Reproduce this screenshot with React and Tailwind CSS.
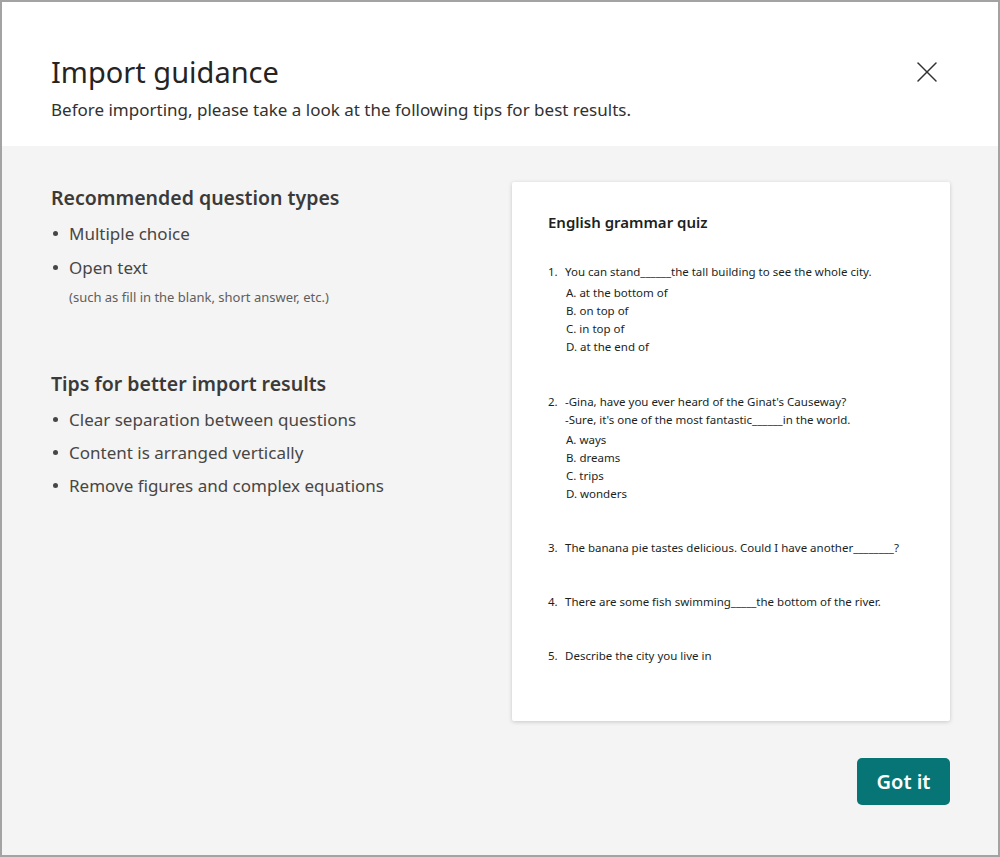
import { X } from 'lucide-react';

const questions = [
  {
    n: '1.',
    lines: ['You can stand______the tall building to see the whole city.'],
    options: ['A. at the bottom of', 'B. on top of', 'C. in top of', 'D. at the end of'],
    optGap: 'mt-[3px]',
  },
  {
    n: '2.',
    lines: ["-Gina, have you ever heard of the Ginat's Causeway?", "-Sure, it's one of the most fantastic______in the world."],
    options: ['A. ways', 'B. dreams', 'C. trips', 'D. wonders'],
    top: 'mt-[1px]',
    optGap: 'mt-[2px]',
  },
  { n: '3.', lines: ['The banana pie tastes delicious. Could I have another________?'], options: [] },
  { n: '4.', lines: ['There are some fish swimming_____the bottom of the river.'], options: [] },
  { n: '5.', lines: ['Describe the city you live in'], options: [] },
];

function Bullet({ children }) {
  return (
    <li className="flex items-center h-[33px] text-[17px] text-[#484644]">
      <span className="w-[5px] h-[5px] rounded-full bg-[#484644] ml-[2px] mr-[11px]" />
      {children}
    </li>
  );
}

export default function App() {
  return (
    <div
      className="w-[1000px] h-[857px] flex flex-col border-2 border-[#a3a3a3] bg-[#f4f4f4] overflow-hidden"
      style={{ fontFamily: '"Noto Sans", "Open Sans", sans-serif' }}
    >
      {/* Header */}
      <div className="bg-white h-[144px] shrink-0 flex justify-between pl-[49px] pr-[60px]">
        <div className="pt-[50px]">
          <h1 className="text-[29px] leading-[40px] text-[#252423] font-normal">Import guidance</h1>
          <p className="mt-[6px] text-[17px] leading-[24px] text-[#323130]">
            Before importing, please take a look at the following tips for best results.
          </p>
        </div>
        <button className="mt-[59px] h-[22px] w-[22px] flex items-center justify-center text-[#323130]">
          <X className="w-[36px] h-[36px] shrink-0" strokeWidth={1} />
        </button>
      </div>

      {/* Body */}
      <div className="flex-1 flex pl-[49px] pt-[36px]">
        <div className="w-[461px] shrink-0">
          <h2 className="mt-[1px] text-[19.5px] leading-[30px] font-semibold text-[#3b3a39]">Recommended question types</h2>
          <ul className="mt-[4px] space-y-[1px]">
            <Bullet>Multiple choice</Bullet>
            <Bullet>Open text</Bullet>
          </ul>
          <p className="pl-[18px] text-[13px] leading-[26px] text-[#605e5c]">(such as fill in the blank, short answer, etc.)</p>

          <h2 className="mt-[59px] text-[19.5px] leading-[30px] font-semibold text-[#3b3a39]">Tips for better import results</h2>
          <ul className="mt-[4px]">
            <Bullet>Clear separation between questions</Bullet>
            <Bullet>Content is arranged vertically</Bullet>
            <Bullet>Remove figures and complex equations</Bullet>
          </ul>
        </div>

        <div className="flex flex-col items-end">
          <div className="w-[438px] h-[539px] bg-white rounded-[2px] shadow-[0_1px_4px_rgba(0,0,0,0.18)] pl-[36px] pt-[28px] text-[#201f1e]">
            <h3 className="text-[15px] leading-[24px] font-semibold">English grammar quiz</h3>
            <div className="mt-[29px] flex flex-col gap-[36px]">
              {questions.map((q) => (
                <div key={q.n} className={`text-[11.5px] ${q.top || ''}`}>
                  {q.lines.map((l, i) => (
                    <div key={i} className="flex leading-[18px]">
                      <span className="w-[17px]">{i === 0 ? q.n : ''}</span>
                      <span>{l}</span>
                    </div>
                  ))}
                  {q.options.length > 0 && (
                    <div className={`${q.optGap} pl-[18px]`}>
                      {q.options.map((o) => (
                        <div key={o} className="leading-[18px]">{o}</div>
                      ))}
                    </div>
                  )}
                </div>
              ))}
            </div>
          </div>
          <button className="mt-[37px] w-[93px] h-[47px] rounded-[5px] bg-[#077575] text-white text-[20px] font-semibold">
            Got it
          </button>
        </div>
      </div>
    </div>
  );
}
